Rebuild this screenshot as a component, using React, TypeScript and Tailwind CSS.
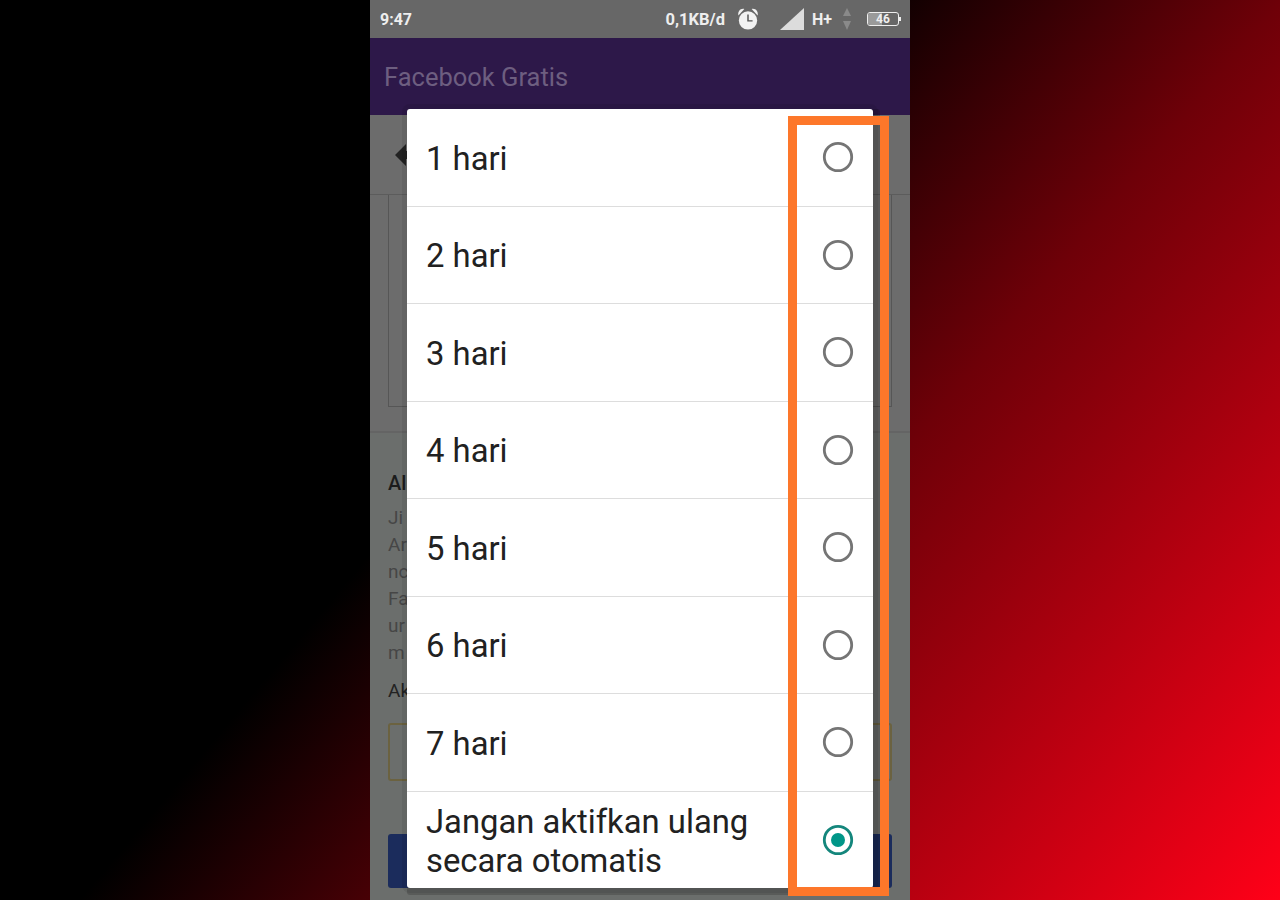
const days = ['1 hari', '2 hari', '3 hari', '4 hari', '5 hari', '6 hari', '7 hari'];

const fragments = ['Ji', 'Ar', 'nc', 'Fa', 'ur', 'm'];

function Radio({ checked }: { checked?: boolean }) {
  return (
    <svg width="32" height="32" viewBox="0 0 32 32" className="shrink-0">
      <circle cx="16" cy="16" r="13.7" fill="none" stroke={checked ? '#14867c' : '#757575'} strokeWidth="2.8" />
      {checked && <circle cx="16" cy="16" r="7" fill="#009688" />}
    </svg>
  );
}

function StatusBar() {
  return (
    <div className="flex h-[38px] shrink-0 items-center bg-[#676767] pl-[10px] pr-[9px] text-[16px] font-bold text-[#eeeeee]">
      <span className="pt-[2px]">9:47</span>
      <span className="ml-auto pt-[2px] text-[16.5px]">0,1KB/d</span>
      {/* alarm */}
      <svg width="22" height="25" viewBox="0 0 24 26" className="ml-[12px]">
        <path d="M1.5 8.5 C0.5 4 4 0.5 8 1.5 Z" fill="#f2f2f2" />
        <path d="M22.5 8.5 C23.5 4 20 0.5 16 1.5 Z" fill="#f2f2f2" />
        <circle cx="12" cy="14" r="10" fill="#f2f2f2" />
        <path d="M12 7.5 V14.5 H17" fill="none" stroke="#555555" strokeWidth="1.6" />
      </svg>
      {/* signal */}
      <svg width="24" height="22" viewBox="0 0 24 22" className="ml-[21px]">
        <path d="M0 22 L24 0 V22 Z" fill="#dcdcdc" />
      </svg>
      <span className="ml-[8px] pt-[2px]">H+</span>
      {/* data arrows */}
      <svg width="10" height="22" viewBox="0 0 10 22" className="ml-[10px]">
        <path d="M5 0 L9 8 H1 Z" fill="#8a8a8a" />
        <path d="M5 22 L9 13 H1 Z" fill="#8a8a8a" />
      </svg>
      {/* battery */}
      <div className="ml-[15px] flex items-center">
        <div className="relative flex h-[14px] w-[32px] items-center justify-center overflow-hidden rounded-[3px] border border-[#eeeeee] text-[12px] leading-none">
          <div className="absolute inset-y-0 left-0 w-[46%] bg-[#9a9a9a]" />
          <span className="relative">46</span>
        </div>
        <div className="h-[4px] w-[2px] bg-[#eeeeee]" />
      </div>
    </div>
  );
}

function Background() {
  return (
    <div className="flex h-full w-[540px] flex-col bg-[#6c6c6c]">
      <StatusBar />
      <div className="flex h-[77px] shrink-0 items-center bg-[#2d1849] pl-[14px] pt-[2px] text-[25.5px] text-[#6d5e80]">
        Facebook Gratis
      </div>
      <div className="flex h-[80px] shrink-0 items-center border-b border-[#5c5c5c] pl-[25px]">
        <svg width="16" height="22" viewBox="0 0 16 22">
          <path d="M0 11 L11 0 V7 H16 V15 H11 V22 Z" fill="#222222" />
        </svg>
      </div>
      <div className="mx-[18px] h-[212px] shrink-0 border border-t-0 border-[#565656]" />
      <div className="mt-[24px] h-[2px] shrink-0 bg-[#646464]" />
      <div className="flex flex-1 flex-col bg-[#6b6e6c] px-[18px]">
        <div className="mt-[37px] text-[20px] font-medium leading-[26px] text-[#1c1c1c]">Al</div>
        <div className="mt-[8px] text-[19px] leading-[27px] text-[#464646]">
          {fragments.map((t) => (
            <div key={t}>{t}</div>
          ))}
        </div>
        <div className="mt-[12px] text-[19px] leading-[26px] text-[#222222]">Ak</div>
        <div className="mt-[19px] h-[58px] rounded-[3px] border-2 border-[#6b6240]" />
        <div className="mt-[53px] h-[54px] rounded-[3px] bg-[#1b2c5c]" />
      </div>
    </div>
  );
}

export default function App() {
  return (
    <div className="flex h-[900px] justify-center overflow-hidden bg-[linear-gradient(130deg,#000000_41%,#6e0008_63%,#ff0018_100%)] font-['Roboto',sans-serif]">
      <div className="relative h-full w-[540px]">
        <Background />

        {/* dialog */}
        <div className="absolute left-[37px] top-[109px] flex h-[779px] w-[466px] flex-col rounded-[3px] bg-white text-[#212121] shadow-[7px_0_0_0_rgba(0,0,0,0.17),0_7px_0_0_rgba(0,0,0,0.17),0_0_0_5px_rgba(0,0,0,0.07)]">
          {days.map((d) => (
            <div key={d} className="flex h-[97.5px] shrink-0 items-center border-b border-[#dddddd] pl-[19px] pr-[19px]">
              <span className="flex-1 pt-[4px] text-[32.8px]">{d}</span>
              <Radio />
            </div>
          ))}
          <div className="flex min-h-0 flex-1 items-center pl-[19px] pr-[19px]">
            <span className="flex-1 pt-[4px] text-[32.8px] leading-[39px]">
              Jangan aktifkan ulang
              <br />
              secara otomatis
            </span>
            <Radio checked />
          </div>
        </div>

        {/* highlight */}
        <div className="absolute left-[418px] top-[116px] h-[780px] w-[101px] border-[9px] border-[#fd772a]" />
      </div>
    </div>
  );
}
